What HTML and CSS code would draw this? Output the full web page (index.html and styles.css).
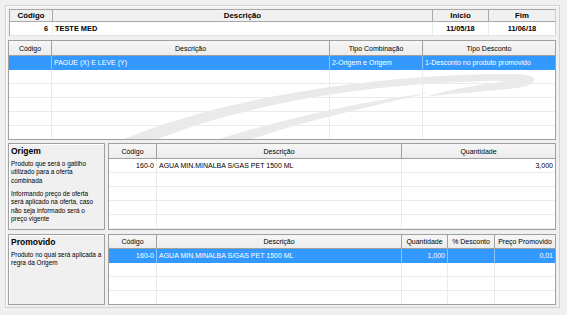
FILE: index.html
```html
<!DOCTYPE html>
<html lang="pt-BR">
<head>
<meta charset="utf-8">
<title>Oferta combinada</title>
<link rel="stylesheet" href="styles.css">
</head>
<body>
<div class="frame">
  <div class="top">
    <div class="th">Código</div>
    <div class="th">Descrição</div>
    <div class="th">Inicio</div>
    <div class="th last">Fim</div>
    <div class="tv r">6</div>
    <div class="tv">TESTE MED</div>
    <div class="tv c">11/05/18</div>
    <div class="tv c last">11/06/18</div>
  </div>

  <div class="grid g1">
    <svg class="wm" viewBox="8 40 548 100" width="548" height="100" aria-hidden="true">
      <path d="M118,140 C215,98 375,72 515,73 C541,74 538,84 516,87 C480,91 447,93 424,96 C445,89 482,83 506,80 C385,80 250,100 152,140 Z" fill="#eaeaea"/>
      <path d="M212,140 C280,118 362,100 428,92 C362,107 292,123 246,140 Z" fill="#eaeaea"/>
    </svg>
    <table>
      <colgroup><col style="width:43px"><col style="width:278px"><col style="width:93px"><col></colgroup>
      <tr><th>Código</th><th>Descrição</th><th>Tipo Combinação</th><th>Tipo Desconto</th></tr>
      <tr class="sel"><td></td><td>PAGUE (X) E LEVE (Y)</td><td>2-Origem e Origem</td><td>1-Desconto no produto promovido</td></tr>
      <tr><td></td><td></td><td></td><td></td></tr>
      <tr><td></td><td></td><td></td><td></td></tr>
      <tr><td></td><td></td><td></td><td></td></tr>
      <tr><td></td><td></td><td></td><td></td></tr>
      <tr><td></td><td></td><td></td><td></td></tr>
    </table>
  </div>

  <div class="sec s-orig">
    <div class="panel">
      <h3>Origem</h3>
      <p>Produto que será o gatilho<br>utilizado para a oferta<br>combinada</p>
      <p>Informando preço de oferta<br>será aplicado na oferta, caso<br>não seja informado será o<br>preço vigente</p>
    </div>
    <div class="grid g2">
      <table>
        <colgroup><col style="width:48px"><col style="width:245px"><col></colgroup>
        <tr><th>Código</th><th>Descrição</th><th>Quantidade</th></tr>
        <tr><td class="r">160-0</td><td>AGUA MIN.MINALBA S/GAS PET 1500 ML</td><td class="r">3,000</td></tr>
        <tr><td></td><td></td><td></td></tr>
        <tr><td></td><td></td><td></td></tr>
        <tr><td></td><td></td><td></td></tr>
        <tr><td></td><td></td><td></td></tr>
      </table>
    </div>
  </div>

  <div class="sec s-prom">
    <div class="panel">
      <h3>Promovido</h3>
      <p>Produto no qual será aplicada a<br>regra da Origem</p>
    </div>
    <div class="grid g3">
      <table>
        <colgroup><col style="width:48px"><col style="width:245px"><col style="width:46px"><col style="width:47px"><col></colgroup>
        <tr><th>Código</th><th>Descrição</th><th>Quantidade</th><th>% Desconto</th><th>Preço Promovido</th></tr>
        <tr class="sel"><td class="r">160-0</td><td>AGUA MIN.MINALBA S/GAS PET 1500 ML</td><td class="r">1,000</td><td></td><td class="r">0,01</td></tr>
        <tr><td></td><td></td><td></td><td></td><td></td></tr>
        <tr><td></td><td></td><td></td><td></td><td></td></tr>
        <tr><td></td><td></td><td></td><td></td><td></td></tr>
      </table>
    </div>
  </div>
</div>
</body>
</html>
```
FILE: styles.css
```css
* { box-sizing: border-box; }
body {
  margin: 0;
  background: #f0f0f0;
  font-family: "Liberation Sans", Arial, sans-serif;
  color: #000;
}
.frame {
  margin: 5px 0 0 5px;
  width: 555px;
  height: 303px;
  border: 1px solid #d2d2d2;
  box-shadow: inset 1px 1px #fff;
  padding: 3px 3px 2px 2px;
  display: flex;
  flex-direction: column;
}
.top {
  margin-left: 1px;
  width: 547px;
  height: 27px;
  display: grid;
  grid-template-columns: 43px 380px 56px 1fr;
  grid-template-rows: 12px 14px;
  border-left: 1px solid #a8a8a8;
  border-top: 1px solid #a8a8a8;
}
.th {
  background: #f0f0f0;
  border-right: 1px solid #a8a8a8;
  border-bottom: 1px solid #a8a8a8;
  font-size: 7.8px;
  font-weight: bold;
  text-align: center;
  line-height: 11px;
}
.tv {
  background: #fff;
  border-right: 1px solid #ececec;
  border-bottom: 1px solid #e4e4e4;
  font-size: 7.4px;
  font-weight: bold;
  line-height: 13px;
  padding: 0 2px;
}
.tv.r { text-align: right; padding-right: 4px; }
.tv.c { text-align: center; }
.top .last { border-right: 1px solid #d0d0d0; }

.grid {
  position: relative;
  border: 1px solid #a0a0a0;
  background: #fff;
  overflow: hidden;
}
.g1 { width: 548px; height: 100px; margin-top: 4px; }
.wm { position: absolute; left: 0; top: 0; }
table {
  position: relative;
  border-collapse: separate;
  border-spacing: 0;
  table-layout: fixed;
  width: 100%;
}
th {
  height: 15px;
  padding: 0;
  font-weight: normal;
  font-size: 7px;
  text-align: center;
  background: linear-gradient(#f6f6f6, #ececec);
  border-right: 1px solid #a0a0a0;
  border-bottom: 1px solid #a0a0a0;
  white-space: nowrap;
  overflow: hidden;
}
td {
  height: 14px;
  padding: 0 2px;
  font-size: 7px;
  border-right: 1px solid #ebebeb;
  border-bottom: 1px solid #ebebeb;
  white-space: nowrap;
  overflow: hidden;
}
th:last-child, td:last-child { border-right: none; }
td.r { text-align: right; }
tr.sel td {
  background: #3399ff;
  color: #fff;
  border-right-color: #8ec3fa;
  border-bottom-color: #3399ff;
}

.sec { display: flex; gap: 3px; }
.s-orig { margin-top: 3px; height: 87px; }
.s-prom { margin-top: 4px; height: 71px; }
.panel {
  width: 97px;
  border: 1px solid #a0a0a0;
  box-shadow: inset 1px 1px #fff;
  padding: 2px 2px;
  white-space: nowrap;
}
.panel h3 {
  margin: 0;
  font-size: 8.5px;
  line-height: 11px;
  font-weight: bold;
}
.panel p {
  margin: 3px 0 0;
  font-size: 6.4px;
  line-height: 8.4px;
}
.panel p + p { margin-top: 4.5px; }
.g2 { width: 448px; height: 87px; }
.g3 { width: 448px; height: 71px; }
.g3 th { height: 14px; }
```
